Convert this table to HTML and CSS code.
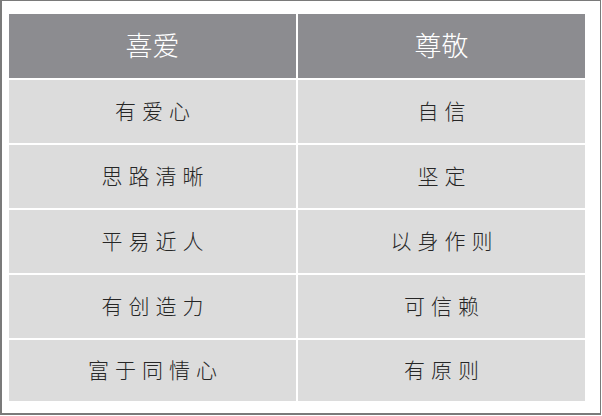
FILE: index.html
```html
<!DOCTYPE html>
<html lang="zh">
<head>
<meta charset="utf-8">
<link rel="stylesheet" href="styles.css">
</head>
<body>
<div class="frame">
  <div class="grid">
    <div class="cell head">喜爱</div>
    <div class="cell head">尊敬</div>
    <div class="cell">有爱心</div>
    <div class="cell">自信</div>
    <div class="cell">思路清晰</div>
    <div class="cell">坚定</div>
    <div class="cell">平易近人</div>
    <div class="cell">以身作则</div>
    <div class="cell">有创造力</div>
    <div class="cell">可信赖</div>
    <div class="cell">富于同情心</div>
    <div class="cell">有原则</div>
  </div>
</div>
</body>
</html>
```

FILE: styles.css
```css
html, body {
  margin: 0;
  padding: 0;
  background: #ffffff;
}
.frame {
  box-sizing: border-box;
  width: 601px;
  height: 415px;
  border-top: 1px solid #7a7a7a;
  border-left: 2px solid #7a7a7a;
  border-right: 1px solid #7a7a7a;
  border-bottom: 2px solid #7a7a7a;
  padding: 13px 15px 0 7px;
  background: #ffffff;
}
.grid {
  display: grid;
  grid-template-columns: 287px 287px;
  grid-template-rows: 64px 63px 63px 63px 63px 61px;
  gap: 2px;
}
.cell {
  background: #dcdcdc;
  display: flex;
  align-items: center;
  justify-content: center;
  font-family: "Noto Sans CJK SC", sans-serif;
  font-size: 21px;
  font-weight: 300;
  color: #262626;
  letter-spacing: 6px;
  text-indent: 6px;
  padding-bottom: 4px;
}
.head {
  background: #8c8c90;
  color: #ffffff;
  font-size: 27px;
  font-weight: 300;
  letter-spacing: 0;
  text-indent: 0;
  padding-bottom: 3px;
}
```
